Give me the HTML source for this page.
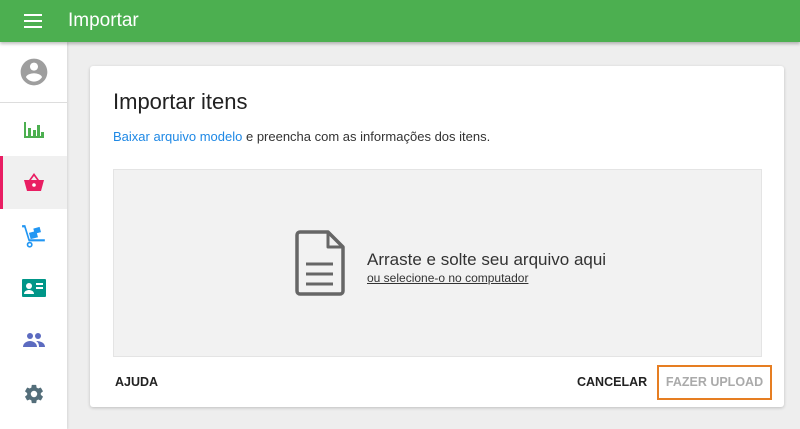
<!DOCTYPE html><html><head><style>
*{margin:0;padding:0;box-sizing:border-box}
body{width:800px;height:429px;overflow:hidden;background:#eeeeee;font-family:"Liberation Sans",sans-serif;position:relative}
.top{position:absolute;left:0;top:0;width:800px;height:42px;background:#4caf50;box-shadow:0 2px 3px rgba(0,0,0,.25);z-index:2}
.top .t{position:absolute;left:68px;top:10px;color:#fff;font-size:19px}
.side{position:absolute;left:0;top:42px;width:67px;height:387px;background:#fff;box-shadow:1px 0 2px rgba(0,0,0,.1)}
.ic{position:absolute;left:0;width:67px;display:flex;justify-content:center;align-items:center}
.card{position:absolute;left:90px;top:66px;width:694px;height:341px;background:#fff;border-radius:3px;box-shadow:0 1px 3px rgba(0,0,0,.2)}
.drop{position:absolute;left:23px;top:103px;width:649px;height:188px;background:#f2f2f2;border:1px solid #e4e4e4}
</style></head><body>
<div class="top">
<svg style="position:absolute;left:24px;top:14px" width="18" height="14"><rect y="0" width="18" height="2" fill="#fff"/><rect y="6" width="18" height="2" fill="#fff"/><rect y="12" width="18" height="2" fill="#fff"/></svg>
<div class="t">Importar</div></div>
<div class="side">
<div class="ic" style="top:14px;height:32px"><svg width="32" height="32" viewBox="0 0 24 24"><path fill="#9e9e9e" d="M12 2C6.48 2 2 6.48 2 12s4.48 10 10 10 10-4.48 10-10S17.52 2 12 2zm0 3c1.66 0 3 1.34 3 3s-1.34 3-3 3-3-1.34-3-3 1.34-3 3-3zm0 14.2c-2.5 0-4.710-1.28-6-3.22.03-1.99 4-3.08 6-3.08 1.99 0 5.970 1.09 6 3.08-1.29 1.94-3.5 3.22-6 3.22z"/></svg></div>
<div style="position:absolute;left:0;top:60px;width:67px;height:1px;background:#ddd"></div>
<div class="ic" style="top:76px;height:24px"><svg width="20" height="18" viewBox="0 0 20 18"><path fill="#4caf50" d="M0 1h2v16H0zM0 15h20v2H0zM4 7h3v10H4zM9 9h3v8H9zM13 4h3v13h-3zM17 11h3v6h-3z"/></svg></div>
<div style="position:absolute;left:0;top:114px;width:67px;height:53px;background:#f0f0f0"></div>
<div style="position:absolute;left:0;top:114px;width:3px;height:53px;background:#e91e63"></div>
<div class="ic" style="top:128px;height:24px"><svg width="22" height="20" viewBox="0 0 22 20"><path fill="#e91e63" d="M11 1l-5 7H1l3 11h14l3-11h-5zM11 4l3 4H8z"/><circle cx="11" cy="13" r="1.8" fill="#fff"/></svg></div>
<div class="ic" style="top:181px;height:26px"><svg width="26" height="26" viewBox="0 0 24 24"><path fill="#2196f3" d="M1 2h3l4 13h14v2H7L3 4H1z"/><rect x="8" y="8" width="7" height="6" fill="#2196f3" transform="rotate(-15 12 11)"/><rect x="12" y="4" width="6" height="5" fill="#2196f3" transform="rotate(-15 16 7)"/><circle cx="8" cy="20" r="2" fill="none" stroke="#2196f3" stroke-width="1.5"/></svg></div>
<div class="ic" style="top:236px;height:20px"><svg width="24" height="20" viewBox="0 0 24 20"><rect x="0" y="1" width="24" height="18" rx="1" fill="#009688"/><circle cx="7" cy="8" r="3" fill="#fff"/><path fill="#fff" d="M2 16c0-3 3-4 5-4s5 1 5 4z"/><rect x="14" y="5" width="7" height="2" fill="#fff"/><rect x="14" y="9" width="7" height="2" fill="#fff"/></svg></div>
<div class="ic" style="top:288px;height:20px"><svg width="22" height="16" viewBox="0 0 22 16"><circle cx="7" cy="4" r="3" fill="#5c6bc0"/><circle cx="15" cy="4" r="3" fill="#5c6bc0"/><path fill="#5c6bc0" d="M0 15c0-4 4-6 7-6s7 2 7 6zM13 9c3 0 9 1 9 6h-6c0-3-1-5-3-6z"/></svg></div>
<div class="ic" style="top:340px;height:24px"><svg width="22" height="22" viewBox="0 0 24 24"><path fill="#546e7a" d="M19.4 13c.04-.32.06-.66.06-1s-.02-.68-.07-1l2.1-1.65c.2-.15.25-.42.13-.64l-2-3.46c-.12-.22-.38-.3-.6-.22l-2.5 1c-.52-.4-1.080-.73-1.7-.98l-.37-2.65A.5.5 0 0 0 14 2h-4a.5.5 0 0 0-.5.42l-.37 2.65c-.6.25-1.17.59-1.7.98l-2.48-1c-.23-.09-.49 0-.6.22l-2 3.46c-.13.22-.08.49.12.64L4.57 11c-.04.32-.07.66-.07 1s.03.68.07 1l-2.1 1.65c-.2.15-.25.42-.13.64l2 3.46c.12.22.38.3.6.22l2.49-1c.52.4 1.08.73 1.7.98l.37 2.65c.05.24.25.42.5.42h4c.25 0 .46-.18.5-.42l.37-2.65c.6-.25 1.17-.58 1.7-.98l2.48 1c.23.09.49 0 .61-.22l2-3.46c.12-.22.07-.49-.12-.64zM12 15.5a3.5 3.5 0 1 1 0-7 3.5 3.5 0 0 1 0 7z"/></svg></div>
</div>
<div class="card">
<div style="position:absolute;left:23px;top:23px;font-size:22px;color:#212121">Importar itens</div>
<div style="position:absolute;left:23px;top:63px;font-size:13px;color:#333"><span style="color:#1e88e5">Baixar arquivo modelo</span> e preencha com as informações dos itens.</div>
<div class="drop">
<svg style="position:absolute;left:181px;top:60px" width="50" height="66" viewBox="0 0 50 66"><path d="M5 2h28l15 15v44a3 3 0 0 1-3 3H5a3 3 0 0 1-3-3V5a3 3 0 0 1 3-3z" fill="none" stroke="#666" stroke-width="3.5" stroke-linejoin="round"/><path d="M33 2v15h15" fill="none" stroke="#666" stroke-width="3" stroke-linejoin="round"/><path d="M11 34h27M11 44h27M11 54h27" stroke="#666" stroke-width="3"/></svg>
<div style="position:absolute;left:253px;top:80px;font-size:17px;color:#333">Arraste e solte seu arquivo aqui</div>
<div style="position:absolute;left:253px;top:101px;font-size:12px;color:#333;text-decoration:underline">ou selecione-o no computador</div>
</div>
<div style="position:absolute;left:25px;top:309px;font-size:12.5px;font-weight:bold;color:#222">AJUDA</div>
<div style="position:absolute;left:487px;top:309px;font-size:12.5px;font-weight:bold;color:#222">CANCELAR</div>
<div style="position:absolute;left:567px;top:299px;width:115px;height:35px;border:2px solid #e67e22;font-size:12.5px;font-weight:bold;color:#aaa;text-align:center;line-height:31px">FAZER UPLOAD</div>
</div>
</body></html>
